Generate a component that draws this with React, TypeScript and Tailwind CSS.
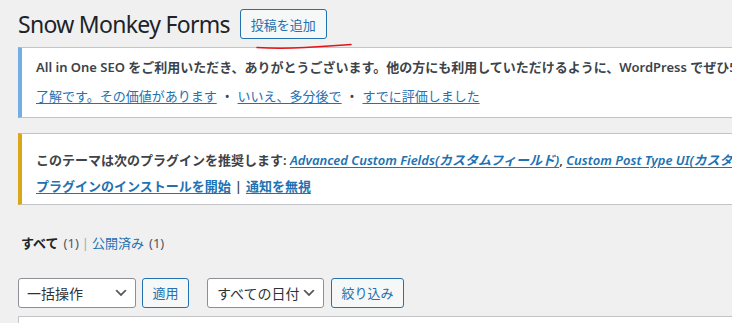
import React from "react";

function Chevron() {
  return (
    <svg width="16" height="16" viewBox="0 0 20 20" className="shrink-0">
      <path d="M5 6l5 5 5-5 2 1-7 7-7-7 2-1z" fill="#555" />
    </svg>
  );
}

export default function App() {
  return (
    <div className="w-[732px] h-[323px] overflow-hidden bg-[#f0f0f1] pl-[18px] font-['Noto_Sans','Noto_Sans_CJK_JP',sans-serif] text-[13px] text-[#3c434a]">
      {/* Title row */}
      <div className="relative flex items-center h-[30px] mt-[9px]">
        <h1 className="text-[23px] leading-[30px] font-normal tracking-[-0.7px] text-[#1d2327] whitespace-nowrap">
          Snow Monkey Forms
        </h1>
        <button className="ml-[10px] h-[30px] w-[87px] border border-[#2271b1] rounded-[3px] bg-[#f6f7f7] text-[#2271b1] text-[13px] leading-none whitespace-nowrap font-['Noto_Sans_CJK_JP',sans-serif]">
          投稿を追加
        </button>
        <svg
          className="absolute left-[237px] top-[33px]"
          width="98"
          height="8"
          viewBox="0 0 98 8"
        >
          <path
            d="M2 5.5 Q 25 7 50 5.5 T 96 2.5"
            stroke="#e1141b"
            strokeWidth="1.6"
            fill="none"
            strokeLinecap="round"
          />
        </svg>
      </div>

      {/* Notice 1 */}
      <div className="mt-[8px] -mr-[40px] bg-white border border-[#c3c4c7] border-l-4 border-l-[#72aee6] pl-[14px] pt-[9px] pb-[11px]">
        <p className="leading-[20px] whitespace-nowrap font-semibold text-[#3c434a]">
          All in One SEO をご利用いただき、ありがとうございます。他の方にも利用していただけるように、WordPress でぜひ5つ星の評価をお願いします。
        </p>
        <p className="mt-[9px] leading-[20px] whitespace-nowrap">
          <a className="text-[#2271b1] underline underline-offset-2">了解です。その価値があります</a>
          <span className="mx-[8px]">•</span>
          <a className="text-[#2271b1] underline underline-offset-2">いいえ、多分後で</a>
          <span className="mx-[8px]">•</span>
          <a className="text-[#2271b1] underline underline-offset-2">すでに評価しました</a>
        </p>
      </div>

      {/* Notice 2 */}
      <div className="mt-[15px] -mr-[40px] bg-white border border-[#c3c4c7] border-l-4 border-l-[#dba617] pl-[14px] pt-[16px] pb-[8px]">
        <p className="leading-[20px] whitespace-nowrap font-semibold text-[#3c434a]">
          このテーマは次のプラグインを推奨します:{" "}
          <em>
            <a className="text-[#2271b1] underline underline-offset-2">Advanced Custom Fields(カスタムフィールド)</a>
          </em>
          ,{" "}
          <em>
            <a className="text-[#2271b1] underline underline-offset-2">Custom Post Type UI(カスタム投稿タイプ)</a>
          </em>
          .
        </p>
        <p className="mt-[6px] leading-[20px] whitespace-nowrap font-semibold">
          <a className="text-[#2271b1] underline underline-offset-2">プラグインのインストールを開始</a>
          <span className="mx-[4px]">|</span>
          <a className="text-[#2271b1] underline underline-offset-2">通知を無視</a>
        </p>
      </div>

      {/* Subsubsub */}
      <div className="mt-[28px] ml-[3px] leading-[20px] whitespace-nowrap flex items-center">
        <span className="font-bold text-[#1d2327]">すべて</span>
        <span className="ml-[5px] text-[#50575e]">(1)</span>
        <span className="mx-[3px] text-[#a7aaad]">|</span>
        <span className="text-[#2271b1]">公開済み</span>
        <span className="ml-[5px] text-[#50575e]">(1)</span>
      </div>

      {/* Controls */}
      <div className="mt-[25px] flex items-center h-[30px]">
        <div className="w-[118px] h-[30px] flex items-center justify-between pl-[8px] pr-[6px] bg-white border border-[#8c8f94] rounded-[3px] text-[14px] text-[#2c3338]">
          <span>一括操作</span>
          <Chevron />
        </div>
        <button className="ml-[6px] h-[30px] w-[47px] border border-[#2271b1] rounded-[3px] bg-[#f6f7f7] text-[#2271b1] text-[13px] leading-none">
          適用
        </button>
        <div className="ml-[18px] w-[117px] h-[30px] flex items-center justify-between pl-[9px] pr-[6px] bg-white border border-[#8c8f94] rounded-[3px] text-[14px] text-[#2c3338]">
          <span className="whitespace-nowrap">すべての日付</span>
          <Chevron />
        </div>
        <button className="ml-[7px] h-[30px] w-[73px] border border-[#2271b1] rounded-[3px] bg-[#f6f7f7] text-[#2271b1] text-[13px] leading-none whitespace-nowrap">
          絞り込み
        </button>
      </div>

      {/* Table top */}
      <div className="mt-[8px] -mr-[40px] h-[20px] bg-white border-t border-l border-[#c3c4c7]"></div>
    </div>
  );
}
